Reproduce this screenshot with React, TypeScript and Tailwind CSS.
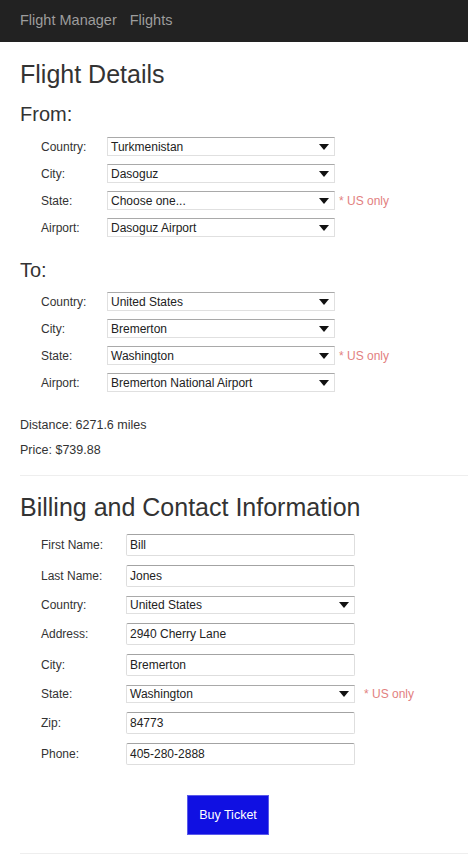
import React from "react";

function Tri() {
  return (
    <svg width="10" height="6" viewBox="0 0 10 6" className="absolute right-[5px] top-1/2 -translate-y-1/2">
      <path d="M0 0 L10 0 L5 6 Z" fill="#111" />
    </svg>
  );
}

function Sel({ value, w, h }: { value: string; w: string; h: string }) {
  return (
    <div className={`relative ${h} ${w} border border-[#e0e0e0] border-t-[#a9a9a9] bg-white flex items-center pl-[3px] text-[12px] leading-[14px] text-[#222] whitespace-nowrap`}>
      {value}
      <Tri />
    </div>
  );
}

function Inp({ value }: { value: string }) {
  return (
    <div className="h-[22px] w-[229px] border border-[#dedede] border-t-[#a3a3a3] rounded-[2px] bg-white flex items-center pl-[3px] text-[12px] leading-[14px] text-[#222] whitespace-nowrap">
      {value}
    </div>
  );
}

function LocRow({ label, value, us }: { label: string; value: string; us?: boolean }) {
  return (
    <div className="flex items-center h-[19px]">
      <div className="w-[66px] text-[12px] leading-[14px] text-[#333]">{label}</div>
      <Sel value={value} w="w-[228px]" h="h-[19px]" />
      {us && <span className="ml-[4px] text-[12px] leading-[14px] text-[#e27f7f] whitespace-nowrap">* US only</span>}
    </div>
  );
}

function BillRow({ label, value, sel, us }: { label: string; value: string; sel?: boolean; us?: boolean }) {
  return (
    <div className="flex items-center">
      <div className="w-[85px] text-[12px] leading-[14px] text-[#333]">{label}</div>
      {sel ? <Sel value={value} w="w-[229px]" h="h-[18px]" /> : <Inp value={value} />}
      {us && <span className="ml-[9px] text-[12px] leading-[14px] text-[#e27f7f] whitespace-nowrap">* US only</span>}
    </div>
  );
}

export default function App() {
  return (
    <div className="min-h-screen bg-white text-[#333]" style={{ fontFamily: '"Liberation Sans", Arial, sans-serif' }}>
      <nav className="h-[42px] bg-[#222] flex items-center px-[20px] gap-[13px] text-[14.5px] text-[#9d9d9d]">
        <span>Flight Manager</span>
        <span>Flights</span>
      </nav>
      <main className="pl-[20px]">
        <h1 className="mt-[18px] text-[25px] leading-[28px] text-[#333]">Flight Details</h1>
        <h2 className="mt-[15px] text-[20px] leading-[22px] text-[#333]">From:</h2>
        <div className="mt-[12px] pl-[21px] flex flex-col gap-[8px]">
          <LocRow label="Country:" value="Turkmenistan" />
          <LocRow label="City:" value="Dasoguz" />
          <LocRow label="State:" value="Choose one..." us />
          <LocRow label="Airport:" value="Dasoguz Airport" />
        </div>
        <h2 className="mt-[22px] text-[20px] leading-[22px] text-[#333]">To:</h2>
        <div className="mt-[11px] pl-[21px] flex flex-col gap-[8px]">
          <LocRow label="Country:" value="United States" />
          <LocRow label="City:" value="Bremerton" />
          <LocRow label="State:" value="Washington" us />
          <LocRow label="Airport:" value="Bremerton National Airport" />
        </div>
        <div className="mt-[26px] text-[12.5px] leading-[15px] text-[#333]">Distance: 6271.6 miles</div>
        <div className="mt-[10px] text-[12.5px] leading-[15px] text-[#333]">Price: $739.88</div>
        <hr className="mt-[17px] border-0 border-t border-[#eee]" />
        <h1 className="mt-[17px] text-[25px] leading-[28px] text-[#333]">Billing and Contact Information</h1>
        <div className="mt-[13px] pl-[21px] flex flex-col gap-[9px]">
          <BillRow label="First Name:" value="Bill" />
          <BillRow label="Last Name:" value="Jones" />
          <BillRow label="Country:" value="United States" sel />
          <BillRow label="Address:" value="2940 Cherry Lane" />
          <BillRow label="City:" value="Bremerton" />
          <BillRow label="State:" value="Washington" sel us />
          <BillRow label="Zip:" value="84773" />
          <BillRow label="Phone:" value="405-280-2888" />
        </div>
        <div className="mt-[30px] pl-[167px]">
          <button className="w-[82px] h-[40px] bg-[#1010e2] border border-[#5a5aea] text-white text-[12.5px]">Buy Ticket</button>
        </div>
        <hr className="mt-[18px] border-0 border-t border-[#eee]" />
      </main>
    </div>
  );
}
